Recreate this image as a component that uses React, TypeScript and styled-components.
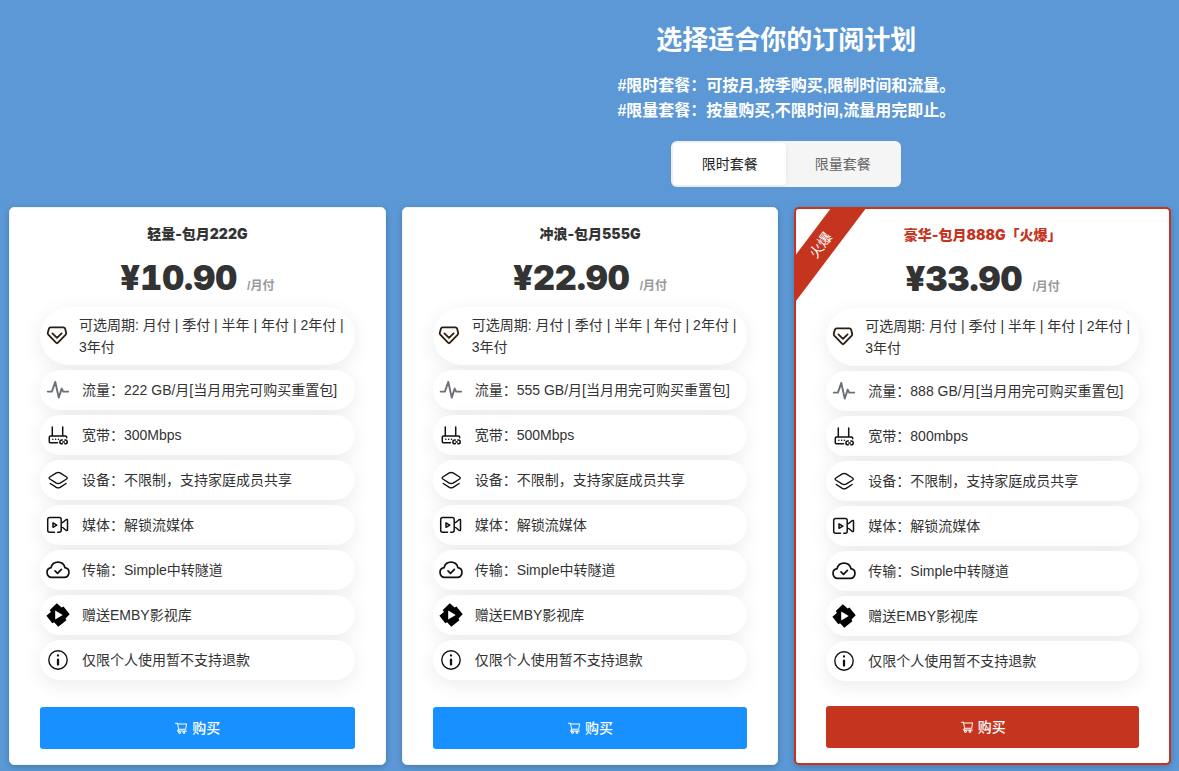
import React from 'react';
import styled, { createGlobalStyle } from 'styled-components';
import { AiOutlineShoppingCart } from 'react-icons/ai';

const GlobalStyle = createGlobalStyle`
  *, *::before, *::after { box-sizing: border-box; }
  body {
    margin: 0;
    background: #5b98d5;
    color: #333;
    font-family: "Liberation Sans", "Noto Sans CJK SC", sans-serif;
    font-size: 14px;
    line-height: 22px;
  }
`;

const RED = '#c4341f';
const BLUE = '#1890ff';

const Page = styled.main`
  min-height: 100vh;
  padding: 21px 8px 6px 9px;
`;

const Header = styled.header`
  display: flex;
  flex-direction: column;
  align-items: center;
  margin-left: calc((100% + 16px) / 3);
  color: #fff;
`;

const Heading = styled.h1`
  margin: 0 0 14px;
  font-size: 26px;
  line-height: 38px;
  font-weight: 700;
`;

const Intro = styled.p`
  margin: 0 0 18px;
  font-size: 16px;
  line-height: 25px;
  font-weight: 600;
`;

const Tabs = styled.div`
  display: grid;
  grid-template-columns: 1fr 1fr;
  width: 230px;
  margin-bottom: 20px;
  padding: 2px;
  border-radius: 6px;
  background: #f5f5f5;
`;

const Tab = styled.button<{ $active?: boolean }>`
  padding: 10px 0;
  border: 0;
  border-radius: 4px;
  background: ${(p) => (p.$active ? '#fff' : 'transparent')};
  box-shadow: ${(p) => (p.$active ? '0 1px 4px rgba(0, 0, 0, 0.08)' : 'none')};
  color: ${(p) => (p.$active ? '#222' : '#666')};
  font: inherit;
`;

const Plans = styled.section`
  display: grid;
  grid-template-columns: repeat(3, 1fr);
  gap: 16px;
`;

const Card = styled.article<{ $hot?: boolean }>`
  position: relative;
  display: flex;
  flex-direction: column;
  min-height: 558px;
  padding: 15px 30px;
  overflow: hidden;
  border: ${(p) => (p.$hot ? `2px solid ${RED}` : '1px solid #eef3f9')};
  border-radius: 5px;
  background: #fff;
  box-shadow: 0 2px 6px rgba(0, 0, 0, 0.2);
`;

const Ribbon = styled.span`
  position: absolute;
  top: 11px;
  left: -47px;
  width: 160px;
  height: 28px;
  padding-right: 28px;
  transform: rotate(-53deg);
  background: ${RED};
  color: #fff;
  line-height: 28px;
  text-align: center;
`;

const Title = styled.h2<{ $hot?: boolean }>`
  margin: 0 0 18px;
  color: ${(p) => (p.$hot ? RED : '#333')};
  font-family: Inter, "Noto Sans CJK SC", sans-serif;
  font-size: 14px;
  line-height: 22px;
  font-weight: 900;
  text-align: center;
`;

const Price = styled.p`
  display: flex;
  justify-content: center;
  align-items: baseline;
  gap: 10px;
  margin: 0 0 6px;
  font-size: 12px;
  line-height: 30px;
`;

const Amount = styled.strong`
  font-family: Inter, sans-serif;
  font-size: 34px;
  font-weight: 900;
  font-variant-numeric: tabular-nums;
`;

const Period = styled.span`
  color: #999;
  font-weight: 700;
`;

const Features = styled.ul`
  display: flex;
  flex-direction: column;
  gap: 5px;
  margin: 0 0 24px;
  padding: 0;
  list-style: none;
`;

const Feature = styled.li`
  display: flex;
  align-items: center;
  gap: 12px;
  min-height: 40px;
  padding: 7px 6px;
  border-radius: 30px;
  background: #fff;
  box-shadow: 0 5px 20px rgba(0, 0, 0, 0.08);
`;

const IconSlot = styled.span<{ $compact?: boolean }>`
  display: flex;
  flex: none;
  justify-content: center;
  width: ${(p) => (p.$compact ? 21 : 24)}px;

  svg {
    display: block;
    flex: none;
  }
`;

const Buy = styled.button<{ $hot?: boolean }>`
  display: flex;
  justify-content: center;
  align-items: center;
  gap: 4px;
  height: 42px;
  margin-top: auto;
  border: 0;
  border-radius: 3px;
  background: ${(p) => (p.$hot ? RED : BLUE)};
  color: #fff;
  font: inherit;
  font-weight: 500;
`;

const Glyph = ({ children, width = 1.5, color = '#111' }: { children: React.ReactNode; width?: number; color?: string }) => (
  <svg width="24" height="24" viewBox="0 0 24 24" fill="none" stroke={color} strokeWidth={width} strokeLinecap="round" strokeLinejoin="round" aria-hidden="true">
    {children}
  </svg>
);

const Gem = () => (
  <Glyph width={1.8} color="#2b1d10">
    <path d="M5.4 3.300h13.200q1 0 1.400 1l1.200 4.400q.3 1.100-.5 2l-7.700 8q-1 1-2 0L3.300 10.700q-.8-.9-.5-2L4 4.300q.4-1 1.400-1z" />
    <path d="M7.400 9.400l4.600 4.400 4.600-4.400" />
  </Glyph>
);

const Pulse = () => (
  <Glyph width={1.9} color="#6b6f78">
    <path d="M1.700 13.600h4.200L9.300 3.900l3.400 15.700 3-9 1.500 3h5" />
  </Glyph>
);

const Router = () => (
  <Glyph width={1.500}>
    <path d="M6.300 4v8.500M16.700 4v8.500M11.500 19.700H4.300q-1 0-1-1v-4.400q0-1.300 1.300-1.300h14.800q1.300 0 1.300 1.300v.5" />
    <path d="M6.800 16.300h.1M9.600 16.300h.1M12.400 16.300h.1" />
    <path d="M16.300 17h-.5a1.900 1.900 0 0 0 0 3.800h.5M18.800 17h.5a1.900 1.900 0 0 1 0 3.800h-.5M16.800 18.900h1.500" />
  </Glyph>
);

const Layers = () => (
  <Glyph width={1.400}>
    <path d="M10.300 4.900q1.900-.8 3.800 0l6.500 4.100q1.300 1 0 2l-6.500 4.100q-1.900.8-3.800 0L3.800 11q-1.300-1 0-2z" />
    <path d="M4.300 15.500l6 3.900q1.900.9 3.800 0l6-3.900" />
  </Glyph>
);

const Video = () => (
  <Glyph width={1.500}>
    <path d="M8.500 19.300H3.700q-2 0-2-2V6.500q0-2 2-2h9.500q2 0 2 2v10.800q0 2-2 2h-1.500M15.200 9.500h1.500l3.300-2.800q1.500-.8 1.500.6v9.400q0 1.400-1.500.6l-3.300-2.800" />
    <path d="M7 9.900v4.400l3.800-2.200z" />
  </Glyph>
);

const Cloud = () => (
  <Glyph width={1.700}>
    <path d="M5.800 19.400a4.900 4.900 0 0 1-.8-9.700 7.200 7.200 0 0 1 14 0 4.900 4.900 0 0 1-.8 9.700z" />
    <path d="M9 12.900l2.500 2.400 3.900-3.900" />
  </Glyph>
);

const Emby = () => (
  <Glyph width={0}>
    <path fill="#000" d="M10.800.2l4.800 4.400 1.900-1 6.200 7.700-4.200 4.100.9 1.900-8.100 6.400-4.200-4.500-1.800 1L.4 12.800l4.500-3.900-1.100-1.800z" />
    <path fill="#fff" d="M9.200 7.600v8.800l7.500-4.400z" />
  </Glyph>
);

const Info = () => (
  <Glyph width={1.400}>
    <circle cx="12" cy="12" r="9.200" />
    <path d="M12 7.500v.1M12 11.700v4.800" strokeWidth="2.300" />
  </Glyph>
);

type Plan = { name: string; price: string; traffic: string; speed: string; hot?: boolean };

const plans: Plan[] = [
  { name: '轻量-包月222G', price: '¥10.90', traffic: '222 GB', speed: '300Mbps' },
  { name: '冲浪-包月555G', price: '¥22.90', traffic: '555 GB', speed: '500Mbps' },
  { name: '豪华-包月888G「火爆」', price: '¥33.90', traffic: '888 GB', speed: '800mbps', hot: true },
];

const PlanCard = ({ name, price, traffic, speed, hot }: Plan) => {
  const features: [React.ReactNode, string][] = [
    [<Pulse />, `流量：${traffic}/月[当月用完可购买重置包]`],
    [<Router />, `宽带：${speed}`],
    [<Layers />, '设备：不限制，支持家庭成员共享'],
    [<Video />, '媒体：解锁流媒体'],
    [<Cloud />, '传输：Simple中转隧道'],
    [<Emby />, '赠送EMBY影视库'],
    [<Info />, '仅限个人使用暂不支持退款'],
  ];
  return (
    <Card $hot={hot}>
      {hot && <Ribbon>火爆</Ribbon>}
      <Title $hot={hot}>{name}</Title>
      <Price>
        <Amount>{price}</Amount>
        <Period>/月付</Period>
      </Price>
      <Features>
        <Feature>
          <IconSlot $compact><Gem /></IconSlot>
          <span>可选周期: 月付 | 季付 | 半年 | 年付 | 2年付 | 3年付</span>
        </Feature>
        {features.map(([icon, text]) => (
          <Feature key={text}>
            <IconSlot>{icon}</IconSlot>
            <span>{text}</span>
          </Feature>
        ))}
      </Features>
      <Buy type="button" $hot={hot}>
        <AiOutlineShoppingCart size={14} aria-hidden="true" />
        购买
      </Buy>
    </Card>
  );
};

export default function App() {
  return (
    <>
      <GlobalStyle />
      <Page>
        <Header>
          <Heading>选择适合你的订阅计划</Heading>
          <Intro>
            #限时套餐：可按月,按季购买,限制时间和流量。
            <br />
            #限量套餐：按量购买,不限时间,流量用完即止。
          </Intro>
          <Tabs>
            <Tab type="button" $active>限时套餐</Tab>
            <Tab type="button">限量套餐</Tab>
          </Tabs>
        </Header>
        <Plans>
          {plans.map((plan) => (
            <PlanCard key={plan.name} {...plan} />
          ))}
        </Plans>
      </Page>
    </>
  );
}
